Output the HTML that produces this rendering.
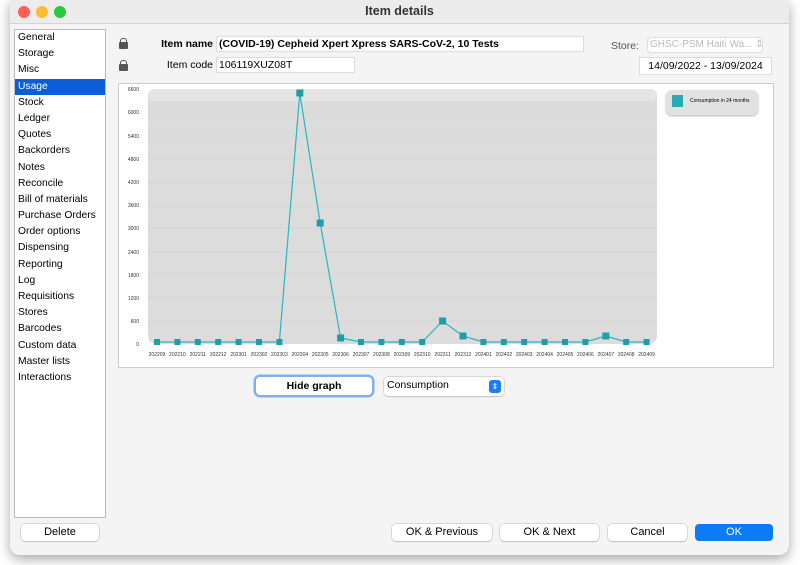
<!DOCTYPE html>
<html><head><style>
body{margin:0;width:800px;height:565px;background:#fff;font-family:"Liberation Sans",sans-serif;position:relative;overflow:hidden}
.win{position:absolute;left:10px;top:0;width:779px;height:555px;background:#f4f4f4;border-radius:0 0 10px 10px;box-shadow:0 4px 12px rgba(0,0,0,.35)}
.tb{position:absolute;left:10px;top:0;width:779px;height:23px;background:#ececec;border-bottom:1px solid #d4d4d4;text-align:center;font-size:12.5px;font-weight:bold;line-height:23px;color:#333}
.dot{position:absolute;top:6px;width:12px;height:12px;border-radius:6px}
.a{position:absolute}
.side{position:absolute;left:14px;top:29px;width:90px;height:487px;background:#fff;border:1px solid #bbb}
.side div{height:16.2px;font-size:10.3px;line-height:16px;padding-left:3px;color:#000;white-space:nowrap}
.side .sel{background:#0a5fd8;color:#fff}
.inp{position:absolute;background:#fff;border:1px solid #ddd;font-size:10.5px;line-height:14px;padding-left:2px;white-space:nowrap;overflow:hidden;box-sizing:border-box}
.btn{position:absolute;height:17px;background:#fff;border-radius:4px;box-shadow:0 0 0 .5px #bbb,0 1px 1px rgba(0,0,0,.2);font-size:11px;text-align:center;line-height:17px}
.lbl{position:absolute;font-size:10.5px;text-align:right;width:100px}
.lock{position:absolute;width:9px;height:7px;background:#555;border-radius:1px}
.lock:before{content:"";position:absolute;left:1px;top:-4px;width:5px;height:4px;border:1px solid #555;border-bottom:none;border-radius:3px 3px 0 0}
</style></head><body>
<div class="win"></div>
<div class="tb">Item details</div>
<div class="dot" style="left:18px;background:#fe5f57"></div>
<div class="dot" style="left:36px;background:#febc2e"></div>
<div class="dot" style="left:54px;background:#28c840"></div>
<div class="side">
<div>General</div><div>Storage</div><div>Misc</div><div class="sel">Usage</div><div>Stock</div><div>Ledger</div><div>Quotes</div><div>Backorders</div><div>Notes</div><div>Reconcile</div><div>Bill of materials</div><div>Purchase Orders</div><div>Order options</div><div>Dispensing</div><div>Reporting</div><div>Log</div><div>Requisitions</div><div>Stores</div><div>Barcodes</div><div>Custom data</div><div>Master lists</div><div>Interactions</div>
</div>
<div class="lock" style="left:119px;top:42px"></div>
<div class="lock" style="left:119px;top:64px"></div>
<div class="lbl" style="left:113px;top:38px;font-weight:bold">Item name</div>
<div class="inp" style="left:216px;top:36px;width:368px;height:16px;font-weight:bold">(COVID-19) Cepheid Xpert Xpress SARS-CoV-2, 10 Tests</div>
<div class="lbl" style="left:113px;top:59px">Item code</div>
<div class="inp" style="left:216px;top:57px;width:139px;height:16px">106119XUZ08T</div>
<div class="lbl" style="left:539px;top:40px;color:#555">Store:</div>
<div class="inp" style="left:647px;top:37px;width:116px;height:16px;color:#bbb;border-radius:4px;font-size:10px">GHSC-PSM Haiti Wa... ⇕</div>
<div class="inp" style="left:639px;top:57px;width:133px;height:18px;line-height:17px;text-align:center;font-size:10.5px;padding:0">14/09/2022 - 13/09/2024</div>
<div class="a" style="left:118px;top:83px;width:654px;height:283px;background:#fff;border:1px solid #ccc"></div>
<div class="a" style="left:666px;top:90px;width:92px;height:25px;background:#e2e2e2;border-radius:6px;box-shadow:0 1px 2px rgba(0,0,0,.3)"></div>
<div class="a" style="left:672px;top:95px;width:11px;height:12px;background:#2aaab5"></div>
<div class="a" style="left:690px;top:98px;font-size:5px">Consumption in 24 months</div>
<svg class="a" style="left:0;top:0" width="800" height="565">
<rect x="148" y="89" width="509" height="255" rx="8" fill="#dcdcdc"/>
<rect x="148" y="89" width="509" height="12" rx="6" fill="#e4e4e4"/>
<g stroke="#d0d0d0" stroke-width=".5">
<line x1="148" x2="657" y1="321" y2="321"/><line x1="148" x2="657" y1="298" y2="298"/><line x1="148" x2="657" y1="275" y2="275"/><line x1="148" x2="657" y1="252" y2="252"/><line x1="148" x2="657" y1="228" y2="228"/><line x1="148" x2="657" y1="205" y2="205"/><line x1="148" x2="657" y1="182" y2="182"/><line x1="148" x2="657" y1="159" y2="159"/><line x1="148" x2="657" y1="136" y2="136"/><line x1="148" x2="657" y1="112" y2="112"/>
</g>
<g font-size="5" text-anchor="end" fill="#333" font-family="Liberation Sans">
<text x="139" y="346">0</text><text x="139" y="323">600</text><text x="139" y="300">1200</text><text x="139" y="277">1800</text><text x="139" y="254">2400</text><text x="139" y="230">3000</text><text x="139" y="207">3600</text><text x="139" y="184">4200</text><text x="139" y="161">4800</text><text x="139" y="138">5400</text><text x="139" y="114">6000</text><text x="139" y="91">6600</text>
</g>
<g font-size="5" text-anchor="middle" fill="#333" font-family="Liberation Sans">
<text x="157" y="356">202209</text><text x="177.4" y="356">202210</text><text x="197.8" y="356">202211</text><text x="218.2" y="356">202212</text><text x="238.6" y="356">202301</text><text x="259" y="356">202302</text><text x="279.4" y="356">202303</text><text x="299.8" y="356">202304</text><text x="320.2" y="356">202305</text><text x="340.6" y="356">202306</text><text x="361" y="356">202307</text><text x="381.4" y="356">202308</text><text x="401.8" y="356">202309</text><text x="422.2" y="356">202310</text><text x="442.6" y="356">202311</text><text x="463" y="356">202312</text><text x="483.4" y="356">202401</text><text x="503.8" y="356">202402</text><text x="524.2" y="356">202403</text><text x="544.6" y="356">202404</text><text x="565" y="356">202405</text><text x="585.4" y="356">202406</text><text x="605.8" y="356">202407</text><text x="626.2" y="356">202408</text><text x="646.6" y="356">202409</text>
</g>
<polyline fill="none" stroke="#2ab5c0" stroke-width="1.2" points="157,342 177.4,342 197.8,342 218.2,342 238.6,342 259,342 279.4,342 299.8,93 320.2,223 340.6,338 361,342 381.4,342 401.8,342 422.2,342 442.6,321 463,336 483.4,342 503.8,342 524.2,342 544.6,342 565,342 585.4,342 605.8,336 626.2,342 646.6,342"/>
<g fill="#1f9ea8">
<rect x="154" y="339" width="6" height="6"/><rect x="174.4" y="339" width="6" height="6"/><rect x="194.8" y="339" width="6" height="6"/><rect x="215.2" y="339" width="6" height="6"/><rect x="235.6" y="339" width="6" height="6"/><rect x="256" y="339" width="6" height="6"/><rect x="276.4" y="339" width="6" height="6"/><rect x="296.3" y="89.5" width="7" height="7"/><rect x="316.7" y="219.5" width="7" height="7"/><rect x="337.1" y="334.5" width="7" height="7"/><rect x="358" y="339" width="6" height="6"/><rect x="378.4" y="339" width="6" height="6"/><rect x="398.8" y="339" width="6" height="6"/><rect x="419.2" y="339" width="6" height="6"/><rect x="439.1" y="317.5" width="7" height="7"/><rect x="459.5" y="332.5" width="7" height="7"/><rect x="480.4" y="339" width="6" height="6"/><rect x="500.8" y="339" width="6" height="6"/><rect x="521.2" y="339" width="6" height="6"/><rect x="541.6" y="339" width="6" height="6"/><rect x="562" y="339" width="6" height="6"/><rect x="582.4" y="339" width="6" height="6"/><rect x="602.3" y="332.5" width="7" height="7"/><rect x="623.2" y="339" width="6" height="6"/><rect x="643.6" y="339" width="6" height="6"/>
</g>
</svg>
<div class="btn" style="left:256px;top:377px;width:116px;height:18px;line-height:18px;box-shadow:0 0 0 2.5px #7fb0f5;font-weight:bold;font-size:10.5px">Hide graph</div>
<div class="btn" style="left:384px;top:377px;width:120px;height:19px;text-align:left;padding-left:3px;box-sizing:border-box;font-size:10.5px">Consumption<span style="position:absolute;right:3px;top:3px;width:12px;height:13px;background:#1d7cf2;border-radius:3px;color:#fff;font-size:8px;line-height:13px;text-align:center">⇕</span></div>
<div class="btn" style="left:21px;top:524px;width:78px">Delete</div>
<div class="btn" style="left:392px;top:524px;width:100px">OK &amp; Previous</div>
<div class="btn" style="left:500px;top:524px;width:99px">OK &amp; Next</div>
<div class="btn" style="left:608px;top:524px;width:79px">Cancel</div>
<div class="btn" style="left:695px;top:524px;width:78px;background:#0b7cf5;color:#fff;box-shadow:none">OK</div>
</body></html>
